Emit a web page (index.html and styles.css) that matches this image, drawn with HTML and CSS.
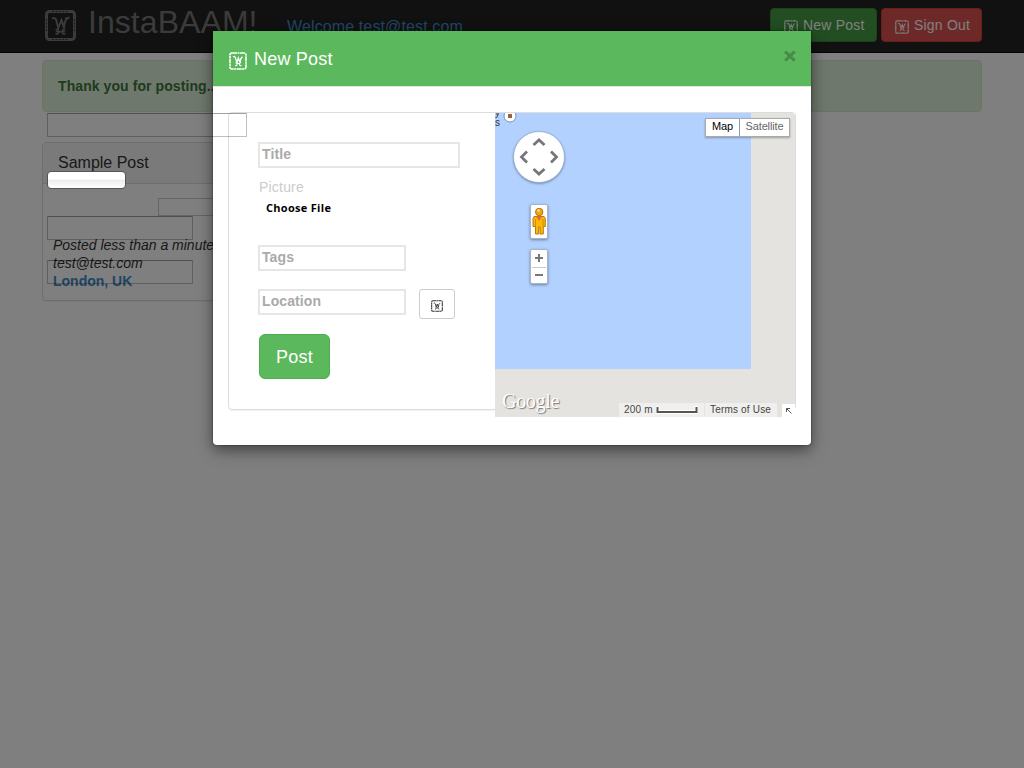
FILE: index.html
```html
<!DOCTYPE html>
<html lang="en">
<head>
<meta charset="utf-8">
<title>InstaBAAM!</title>
<link rel="stylesheet" href="styles.css">
</head>
<body>
<svg class="defs" width="0" height="0" aria-hidden="true">
  <symbol id="badge" viewBox="0 0 31 31">
    <rect x="1.5" y="1.5" width="28" height="28" rx="3" fill="none" stroke="currentColor" stroke-width="3"/>
    <path class="notches" d="M7 1.500h17M7 29.500h17M1.500 9v13M29.500 9v13" fill="none" stroke-width="1" stroke-dasharray="2 1.4"/>
    <path d="M7 8.500q2.500-1.500 4 1l2.300 8.500L16.500 10L19 18q0-7 4-10.500M20 8q2.500 1.200 4.500-.8" fill="none" stroke="currentColor" stroke-width="1.900"/>
    <path d="M10.500 19.500q3.500-.8 3 1.200q-1.500 1-2.500 .7q3 .3 2.500 1.800q-1 1.300-3 .3M20.500 19.500q-3.500-.8-3 1.200q1.500 1 2.500 .7q-3 .3-2.500 1.800q1 1.300 3 .3M13 21.800h5" fill="none" stroke="currentColor" stroke-width="1.400"/>
  </symbol>
  <symbol id="badge-small" viewBox="0 0 18 18">
    <rect x="1" y="1" width="16" height="16" rx="2" fill="none" stroke="currentColor" stroke-width="1.6" stroke-dasharray="5 .5 2 .5"/>
    <path d="M4 4.800q1.500-.8 2.300 .7L8 10.500l1.300-4.500L11 10.500q0-4 2.500-5.800" fill="none" stroke="currentColor" stroke-width="1.300"/>
    <path d="M6 13.700q2.200 .3 2-2.200h2.500q-.2 2.500 2 2.200M7.500 11l-1-.5M11 11l1-.5" fill="none" stroke="currentColor" stroke-width="1.200"/>
  </symbol>
</svg>

<div class="page">
  <header class="navbar">
    <div class="brand"><svg class="brand-icon"><use href="#badge"/></svg><span>InstaBAAM!</span></div>
    <a class="welcome">Welcome test@test.com</a>
    <nav class="actions">
      <a class="btn btn-success"><svg class="icon"><use href="#badge-small"/></svg>New Post</a>
      <a class="btn btn-danger"><svg class="icon"><use href="#badge-small"/></svg>Sign Out</a>
    </nav>
  </header>
  <main class="container">
    <div class="alert">Thank you for posting..</div>
    <article class="panel post">
      <h2 class="post-title">Sample Post</h2>
      <div class="post-body">
        <em>Posted less than a minute<br>test@test.com</em><br>
        <a class="place">London, UK</a>
      </div>
    </article>
  </main>
</div>
<div class="backdrop"></div>
<div class="ghost ghost-file"></div>

<section class="modal">
  <header class="modal-header">
    <svg class="modal-icon"><use href="#badge-small"/></svg>
    <h1 class="modal-title">New Post</h1>
    <span class="close">×</span>
  </header>
  <div class="modal-body">
    <div class="panel form-panel">
      <form class="form">
        <div class="field field-wide">Title</div>
        <div class="label">Picture</div>
        <div class="file">Choose File</div>
        <div class="field tags">Tags</div>
        <div class="row">
          <div class="field">Location</div>
          <div class="locate"><svg class="locate-icon"><use href="#badge-small"/></svg></div>
        </div>
        <div class="submit">Post</div>
      </form>
      <div class="map">
        <div class="water"></div>
        <div class="place-label"><span>y</span><span>s</span></div>
        <svg class="station" viewBox="0 0 24 16"><circle cx="15" cy="3" r="6" fill="#fff" stroke="#7896bb"/><rect x="13" y="1" width="4" height="4" fill="#9b623d"/></svg>
        <svg class="pan" viewBox="0 0 60 60"><circle cx="29" cy="29" r="25.500" fill="#fff" stroke="#8ba7cf" stroke-width=".7"/><path d="M23.500 17l5.500-5l5.500 5M23.500 41l5.500 5l5.500-5M17 23.500l-5.500 5.500l5.500 5.500M41 23.500l5.500 5.500l-5.500 5.500" fill="none" stroke="#777" stroke-width="2.800"/></svg>
        <div class="pegman"><svg width="14" height="29" viewBox="0 0 14 29"><path d="M2 8.500h10l1.300 2v8h-2V26H8V19H6.700v7H3.500v-7.500H1v-8z" fill="#fbb903" stroke="#b87913"/><path d="M4 8.500h6L7.200 13z" fill="#e86455"/><circle cx="7.200" cy="4" r="3.700" fill="#f5a50a" stroke="#b4750f"/><circle cx="6.500" cy="2.500" r="1.200" fill="#ffe8a3"/><path d="M3.500 11v7M11 11v7" stroke="#c98212" stroke-width=".8"/></svg></div>
        <div class="zoom"><svg width="16" height="34" viewBox="0 0 16 34"><path d="M4 8h8M8 4v8M4 25h8" stroke="#777" stroke-width="2"/><path d="M1 17.500h14" stroke="#c8c8c8"/></svg></div>
        <div class="types"><span class="type active">Map</span><span class="type">Satellite</span></div>
        <div class="google">Google</div>
        <div class="legal">
          <span class="scale">200 m <svg width="42" height="8" viewBox="0 0 42 8"><path d="M1.500 0v6h39V0" fill="none" stroke="#fff" stroke-width="4"/><path d="M1.500 1v5h39V1" fill="none" stroke="#555" stroke-width="2"/></svg></span>
          <span class="terms">Terms of Use</span>
        </div>
        <div class="expand"><svg width="6" height="6" viewBox="0 0 6 6"><path d="M.5 4V.5H4M.5 .5l5 5" fill="none" stroke="#555"/></svg></div>
      </div>
    </div>
  </div>
</section>
<div class="ghost ghost-title"></div>
<div class="ghost ghost-tags"></div>
<div class="ghost ghost-location"></div>
<div class="ghost-button"></div>
</body>
</html>
```

FILE: styles.css
```css
* { box-sizing: border-box; }
body { margin: 0; width: 1024px; height: 768px; overflow: hidden; background: #fff; color: #333; font: 14px/18px "Liberation Sans", Arial, sans-serif; }
.defs { position: absolute; }
.notches { stroke: #222; opacity: .8; }
.page { height: 768px; }
.navbar { height: 53px; padding: 0 42px; display: flex; align-items: flex-start; background: #222; border-bottom: 1px solid #080808; }
.brand { display: flex; width: 245px; padding: 4px 0 0 3px; color: #777; font-size: 32px; line-height: 36px; letter-spacing: .06px; white-space: nowrap; }
.brand-icon { width: 31px; height: 31px; margin: 6px 12px 0 0; }
.welcome { padding-top: 18px; color: #428bca; font-size: 16px; letter-spacing: .12px; }
.actions { display: flex; gap: 4px; margin: 8px 0 0 auto; }
.btn { display: flex; height: 34px; padding: 0 12px; align-items: center; color: #fff; border: 1px solid; border-radius: 4px; line-height: 32px; letter-spacing: .2px; white-space: nowrap; }
.btn-success { width: 107px; background: #449d44; border-color: #398439; }
.btn-danger { width: 101px; background: #d9534f; border-color: #d43f3a; }
.icon { width: 14px; height: 14px; margin: 4px 5px 0 1px; flex: none; }
.container { padding: 7px 42px 0; }
.alert { height: 52px; padding: 16px 15px; background: #dff0d8; border: 1px solid #d6e9c6; border-radius: 4px; color: #3c763d; font-weight: bold; letter-spacing: .08px; }
.panel { border: 1px solid #ddd; border-radius: 4px; box-shadow: 0 1px 1px rgba(0,0,0,.05); }
.post { width: 300px; height: 159px; margin-top: 30px; }
.post-title { height: 41px; margin: 0; padding: 10px 15px; border-bottom: 1px solid #ddd; background: #f5f5f5; font-size: 16px; font-weight: normal; line-height: 20px; }
.post-body { padding: 52px 10px 0; white-space: nowrap; }
.place { color: #428bca; font-weight: bold; }
.backdrop { position: absolute; inset: 0; background: rgba(0,0,0,.5); }

.modal { position: absolute; left: 213px; top: 31px; width: 598px; height: 414px; background: #fff; border-radius: 0 0 4px 4px; box-shadow: 0 5px 15px rgba(0,0,0,.5), 0 0 2px rgba(0,0,0,.6); }
.modal-header { height: 56px; padding: 0 15px 0 16px; display: flex; background: #5cb85c; border-bottom: 1px solid #e5e5e5; color: #fff; }
.modal-icon { width: 18px; height: 18px; margin: 21px 7px 0 0; }
.modal-title { margin: 17px 0 0; font-size: 18px; line-height: 22px; font-weight: normal; letter-spacing: .2px; }
.close { margin: 14px 0 0 auto; color: #000; opacity: .23; font-size: 21px; line-height: 22px; font-weight: bold; text-shadow: 0 1px 0 #fff; -webkit-text-stroke: 1px #000; }
.modal-body { padding: 25px 15px; }
.form-panel { display: flex; width: 568px; height: 298px; }
.form { width: 266px; padding: 29px 0 0 29px; flex: none; }
.field { width: 148px; height: 26px; padding-left: 2px; border: 2px solid #e6e6e6; color: #aaa; font-weight: bold; line-height: 21px; letter-spacing: .1px; }
.field-wide { width: 202px; }
.label { height: 30px; padding: 10px 1px 0; color: #ccc; letter-spacing: .2px; }
.file { height: 20px; padding-left: 8px; font: bold 11px/20px "Open Sans", sans-serif; color: #000; letter-spacing: .3px; }
.tags { margin-top: 27px; }
.row { display: flex; align-items: flex-start; gap: 13px; margin-top: 18px; }
.locate { display: flex; width: 36px; height: 30px; border: 1px solid #ccc; border-radius: 3px; color: #333; justify-content: center; }
.locate-icon { width: 12px; height: 12px; margin-top: 10px; }
.submit { width: 71px; height: 45px; margin: 15px 0 0 1px; background: #5cb85c; border: 1px solid #4cae4c; border-radius: 6px; color: #fff; text-align: center; font-size: 18px; line-height: 45px; letter-spacing: .2px; }

.map { position: relative; width: 300px; height: 304px; background: #e4e3df; overflow: hidden; border-radius: 0 4px 0 0; flex: none; line-height: 14px; }
.water { width: 256px; height: 256px; background: #b3d1ff; }
.place-label { position: absolute; left: 0; top: -5px; display: grid; font-size: 10px; line-height: 10px; color: #333; }
.place-label span + span { line-height: 9px; }
.station { position: absolute; left: 0; top: 0; width: 24px; height: 16px; }
.pan { position: absolute; left: 15px; top: 15px; width: 60px; height: 60px; filter: drop-shadow(0 1px 1px rgba(0,0,0,.35)); }
.pegman, .zoom { position: absolute; left: 35px; width: 18px; background: #fff; border: 1px solid #a4b6cf; border-radius: 2px; box-shadow: 0 1px 3px rgba(0,0,0,.4); }
.pegman { top: 91px; height: 35px; padding: 3px 1px; }
.zoom { top: 136px; height: 35px; }
.pegman svg, .zoom svg { display: block; }
.types { position: absolute; left: 210px; top: 5px; display: flex; height: 19px; border: 1px solid #aaa; background: #fff; box-shadow: 0 1px 2px rgba(0,0,0,.3); }
.type { width: 49px; text-align: center; color: #666; font-size: 11px; line-height: 15px; letter-spacing: -.15px; }
.active { width: 34px; border-right: 1px solid #8a9bb7; color: #000; }
.google { position: absolute; left: 7px; top: 276px; color: #fff; font: 20px/24px "Liberation Serif", serif; letter-spacing: -.3px; text-shadow: 1px 1px 1px #777; }
.legal { position: absolute; left: 124px; top: 290px; display: flex; gap: 1px; color: #444; font-size: 10px; letter-spacing: .18px; white-space: nowrap; }
.scale, .terms { height: 14px; padding-left: 5px; background: #f0efed; }
.scale { width: 85px; }
.scale svg { vertical-align: -1px; }
.terms { width: 72px; }
.expand { position: absolute; right: 0; bottom: 0; display: grid; place-items: center; width: 13px; height: 13px; background: #fff; }

.ghost { position: absolute; left: 47px; width: 146px; height: 24px; border: 1px solid rgba(0,0,0,.25); border-top-color: rgba(0,0,0,.36); }
.ghost-title { top: 113px; width: 200px; }
.ghost-tags { top: 216px; }
.ghost-location { top: 260px; }
.ghost-file { left: 158px; top: 198px; width: 70px; height: 18px; border-color: rgba(0,0,0,.2); }
.ghost-button { position: absolute; left: 47px; top: 171px; width: 79px; height: 18px; border: 1px solid #555; border-radius: 4px; background: linear-gradient(#fff 0 45%, #ececec 50%, #fff); }
```
